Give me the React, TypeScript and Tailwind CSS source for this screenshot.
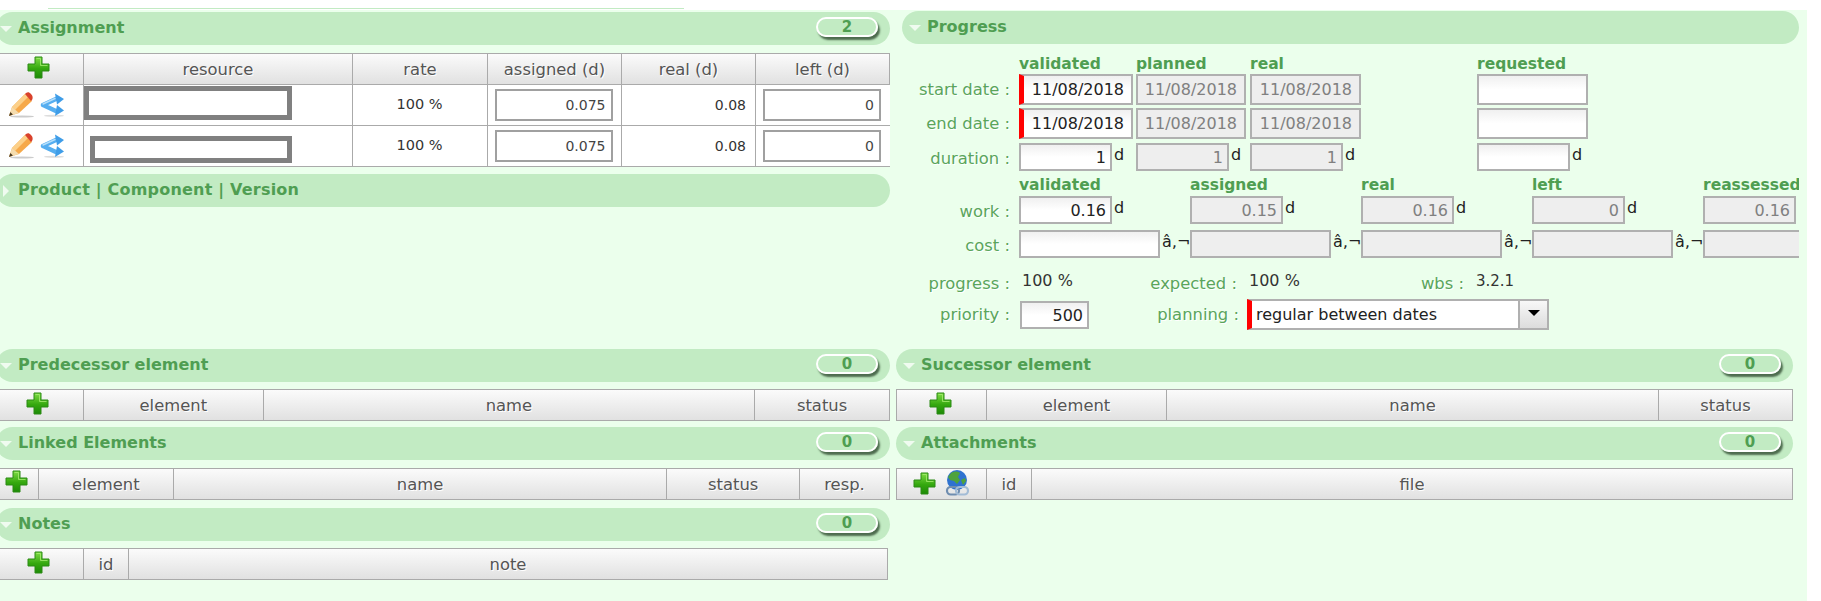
import React from "react";

const font = "[font-family:'DejaVu_Sans',Verdana,sans-serif]";

function Plus() {
  return (
    <svg width="23" height="23" viewBox="0 0 23 23" className="shrink-0">
      <defs>
        <linearGradient id="pg" x1="0" y1="0" x2="0" y2="1">
          <stop offset="0" stopColor="#7fdc45" />
          <stop offset="0.55" stopColor="#35a80f" />
          <stop offset="1" stopColor="#1c8a06" />
        </linearGradient>
      </defs>
      <path d="M8 1h7v7h7v7h-7v7H8v-7H1V8h7z" fill="url(#pg)" stroke="#2a8a15" strokeWidth="1" />
      <path d="M9.5 2.5h4v7h7" fill="none" stroke="#a5ec70" strokeWidth="1" opacity="0.8" />
    </svg>
  );
}

function Pencil() {
  return (
    <svg width="26" height="26" viewBox="0 0 26 26" className="shrink-0">
      <ellipse cx="14" cy="24.5" rx="12" ry="1" fill="#ccc" />
      <path d="M1 24l3-9L17 2l7 7L11 21z" fill="#f6a94a" />
      <path d="M4 15L17 2l3 3L7 18z" fill="#fcd089" />
      <path d="M18 1c2-1 3-1 5 1s2 4 1 6l-1 1-6-7z" fill="#d9412b" />
      <path d="M1 24l3-9 7 6z" fill="#f5dcae" />
      <path d="M1 24l1.3-4 2.7 2.4z" fill="#4a3a20" />
    </svg>
  );
}

function Share() {
  return (
    <svg width="25" height="24" viewBox="0 0 25 24" className="shrink-0">
      <ellipse cx="14" cy="22.8" rx="10" ry="1" fill="#ddd" />
      <path d="M3 12L17 5.5M3 12l14 6.5" fill="none" stroke="#56aef0" strokeWidth="4.5" strokeLinecap="round" />
      <path d="M15 0.5l9 5.5-7 5.5z" fill="#3f9de8" strokeLinejoin="round" />
      <path d="M15 23l9-5.5-7-5.5z" fill="#3f9de8" strokeLinejoin="round" />
      <path d="M3 11L15 5.5" fill="none" stroke="#b5defa" strokeWidth="1.4" strokeLinecap="round" />
    </svg>
  );
}

function Globe() {
  return (
    <svg width="25" height="26" viewBox="0 0 25 26" className="shrink-0">
      <circle cx="12" cy="10" r="10" fill="#2f72d0" />
      <path d="M6 3c3-2 7-2 9 0l-2 4 2 3-3 4-3-3-4-1-2-3z" fill="#4fa33c" />
      <path d="M16 10l4-2 1 3-3 4z" fill="#4fa33c" />
      <rect x="2" y="17" width="12" height="7.5" rx="3.7" fill="none" stroke="#6f8db0" strokeWidth="2.2" />
      <rect x="11" y="17" width="12" height="7.5" rx="3.7" fill="none" stroke="#a3bcd6" strokeWidth="2.2" />
    </svg>
  );
}

function Header({
  title,
  count,
  open = true,
  right,
  className = "",
}: {
  title: string;
  count?: number;
  open?: boolean;
  right?: boolean;
  className?: string;
}) {
  return (
    <div className={`flex h-[33px] items-center rounded-[17px] bg-[#c2ebc3] ${className}`}>
      <span className={`flex shrink-0 justify-start ${right ? "w-[25px] pl-[7px]" : "w-[22px] pl-[4px]"}`}>
        {open ? (
          <span className="h-0 w-0 border-x-[6px] border-t-[6px] border-x-transparent border-t-[#f0fbf0]" />
        ) : (
          <span className="ml-[3px] h-0 w-0 border-y-[6px] border-l-[6px] border-y-transparent border-l-[#f0fbf0]" />
        )}
      </span>
      <span className={`pb-[1px] text-[16px] font-bold leading-none text-[#4f9e52] ${open ? "" : "tracking-[0.2px] pb-[2px]"}`}>{title}</span>
      {count !== undefined && (
        <span className="mb-[3px] ml-auto mr-[12px] flex h-[20px] w-[62px] items-center justify-center rounded-full border-2 border-white text-[15px] font-bold text-[#4f9e52] shadow-[2px_3px_2px_#4d6b4e]">
          {count}
        </span>
      )}
    </div>
  );
}

function Th({ children, w, last }: { children?: React.ReactNode; w: string; last?: boolean }) {
  return (
    <div
      className={`flex h-full items-center justify-center bg-gradient-to-b from-[#fbfbfb] to-[#e1e1e1] text-[16.4px] text-[#555] [text-shadow:1px_1px_0_#fff] ${w} ${last ? "" : "border-r border-[#aaa]"}`}
    >
      {typeof children === "string" ? <span className="pt-[2px]">{children}</span> : children}
    </div>
  );
}

function NumInput({ v }: { v: string }) {
  return (
    <div className="mr-[2px] flex h-[32px] w-[118px] items-center justify-end border-2 border-[#a0a0a0] bg-white pr-[5px] text-[14px] text-[#444]">
      {v}
    </div>
  );
}

function Cell({ children, w, last, right }: { children?: React.ReactNode; w: string; last?: boolean; right?: boolean }) {
  return (
    <div className={`flex h-full items-center ${w} ${right ? "justify-end pr-[9px]" : "justify-center"} ${last ? "" : "border-r border-[#aaa]"}`}>
      {children}
    </div>
  );
}

function AssignRow({ top }: { top?: boolean }) {
  return (
    <div className="flex h-[41px] border-b border-[#aaa] bg-white text-[14px] text-[#333]">
      <Cell w="w-[84px]">
        <span className="flex items-center gap-[6px] pr-[10px]">
          <Pencil />
          <Share />
        </span>
      </Cell>
      <div className="flex h-full w-[269px] border-r border-[#aaa]">
        {top ? (
          <div className="mt-[1px] h-[34px] w-[208px] border-[5px] border-[#808080] bg-white" />
        ) : (
          <div className="ml-[6px] mt-[10px] h-[27px] w-[202px] border-[5px] border-[#808080] bg-white" />
        )}
      </div>
      <Cell w="w-[135px]">
        <span className="pr-[1px] text-[14.5px]">100 %</span>
      </Cell>
      <Cell w="w-[134px]">
        <NumInput v="0.075" />
      </Cell>
      <Cell w="w-[134px]" right>
        0.08
      </Cell>
      <Cell w="w-[134px]" last>
        <NumInput v="0" />
      </Cell>
    </div>
  );
}

function Field({
  v = "",
  w,
  h = "h-[28px]",
  disabled,
  req,
  date,
  unit,
}: {
  v?: string;
  w: string;
  h?: string;
  disabled?: boolean;
  req?: boolean;
  date?: boolean;
  unit?: string;
}) {
  return (
    <div className="flex items-start">
      <div
        className={`flex shrink-0 items-center justify-end border-2 border-[#b0b0b0] pt-[1px] text-[16px] ${w} ${h} ${date ? "pr-[7px]" : "pr-[4px]"} ${
          disabled
            ? "bg-[#eeeeee] text-[#808080]"
            : "bg-gradient-to-b from-[#f0f0f0] via-white to-white text-[#222]"
        } ${req ? "border-l-[5px] border-l-[#ff0000]" : ""}`}
      >
        {v}
      </div>
      {unit && <span className="ml-[2px] whitespace-nowrap text-[16px] leading-[24px] text-[#222]">{unit}</span>}
    </div>
  );
}

function Label({ children, w = "w-[108px]" }: { children: React.ReactNode; w?: string }) {
  return (
    <div className={`shrink-0 pt-[4px] text-right text-[16.4px] leading-[24px] text-[#5aa55c] [text-shadow:1px_1px_0_#fff] ${w}`}>
      {children}
    </div>
  );
}

function Cap({ children }: { children: React.ReactNode }) {
  return <div className="text-[15.5px] font-bold leading-[18px] text-[#4f9e52]">{children}</div>;
}

function Progress() {
  const dateCols = "grid grid-cols-[117px_117px_114px_227px_1fr] items-start";
  const workCols = "grid grid-cols-[117px_171px_171px_171px_171px_95px] items-start";
  return (
    <div className="w-[897px] overflow-hidden">
      <Header title="Progress" right />
      <div className="mt-[9px]">
        <div className={`${dateCols} h-[21px] pt-[2px]`}>
          <div />
          <Cap>validated</Cap>
          <Cap>planned</Cap>
          <Cap>real</Cap>
          <Cap>requested</Cap>
        </div>
        <div className={`${dateCols} h-[34px]`}>
          <Label>start date :</Label>
          <Field v="11/08/2018" w="w-[114px]" h="h-[31px]" req date />
          <Field v="11/08/2018" w="w-[110px]" h="h-[31px]" disabled date />
          <Field v="11/08/2018" w="w-[111px]" h="h-[31px]" disabled date />
          <Field w="w-[111px]" h="h-[31px]" />
        </div>
        <div className={`${dateCols} h-[35px]`}>
          <Label>end date :</Label>
          <Field v="11/08/2018" w="w-[114px]" h="h-[31px]" req date />
          <Field v="11/08/2018" w="w-[110px]" h="h-[31px]" disabled date />
          <Field v="11/08/2018" w="w-[111px]" h="h-[31px]" disabled date />
          <Field w="w-[111px]" h="h-[31px]" />
        </div>
        <div className={`${dateCols} h-[32px]`}>
          <Label>duration :</Label>
          <Field v="1" w="w-[93px]" unit="d" />
          <Field v="1" w="w-[93px]" disabled unit="d" />
          <Field v="1" w="w-[93px]" disabled unit="d" />
          <Field w="w-[93px]" unit="d" />
        </div>
        <div className={`${workCols} h-[21px] pt-[1px]`}>
          <div />
          <Cap>validated</Cap>
          <Cap>assigned</Cap>
          <Cap>real</Cap>
          <Cap>left</Cap>
          <Cap>
            <span className="whitespace-nowrap">reassessed</span>
          </Cap>
        </div>
        <div className={`${workCols} h-[34px]`}>
          <Label>work :</Label>
          <Field v="0.16" w="w-[93px]" unit="d" />
          <Field v="0.15" w="w-[93px]" disabled unit="d" />
          <Field v="0.16" w="w-[93px]" disabled unit="d" />
          <Field v="0" w="w-[93px]" disabled unit="d" />
          <Field v="0.16" w="w-[93px]" disabled />
        </div>
        <div className={`${workCols} h-[38px]`}>
          <Label>cost :</Label>
          <Field w="w-[141px]" unit="â‚¬" />
          <Field w="w-[141px]" disabled unit="â‚¬" />
          <Field w="w-[141px]" disabled unit="â‚¬" />
          <Field w="w-[141px]" disabled unit="â‚¬" />
          <div className="h-[28px] w-[110px] border-2 border-[#b0b0b0] bg-[#eeeeee]" />
        </div>
        <div className="flex h-[31px] items-start text-[16px] leading-[24px] text-[#333]">
          <Label>progress :</Label>
          <span className="ml-[12px] w-[113px] pt-[1px]">100 %</span>
          <Label w="w-[102px]">expected :</Label>
          <span className="ml-[12px] w-[125px] pt-[1px]">100 %</span>
          <Label w="w-[90px]">wbs :</Label>
          <span className="ml-[12px] pt-[1px] text-[15px]">3.2.1</span>
        </div>
        <div className="flex items-start">
          <Label>priority :</Label>
          <div className="ml-[10px] mt-[2px]">
            <Field v="500" w="w-[69px]" />
          </div>
          <div className="ml-[40px]">
            <Label w="w-[110px]">planning :</Label>
          </div>
          <div className="ml-[8px] flex h-[31px] w-[302px] border-2 border-[#b0b0b0] border-l-[5px] border-l-[#ff0000] bg-white">
            <div className="flex flex-1 items-center pl-[4px] pt-[1px] text-[16px] text-[#222]">regular between dates</div>
            <div className="flex w-[29px] items-center justify-center border-l-2 border-[#b0b0b0] bg-gradient-to-b from-[#f8f8f8] to-[#dcdcdc]">
              <span className="mb-[3px] h-0 w-0 border-x-[6px] border-t-[6px] border-x-transparent border-t-black" />
            </div>
          </div>
        </div>
      </div>
    </div>
  );
}

function Table({ cols }: { cols: { w: string; c?: React.ReactNode }[] }) {
  return (
    <div className="flex h-[32px] border border-[#aaa]">
      {cols.map((col, i) => (
        <Th key={i} w={col.w} last={i === cols.length - 1}>
          {col.c}
        </Th>
      ))}
    </div>
  );
}

export default function App() {
  return (
    <div className={`relative h-[601px] w-[1821px] overflow-hidden bg-white ${font}`}>
      <div className="ml-[48px] mt-[8px] h-[1px] w-[636px] bg-[#c2ebc3]" />
      <div className="mt-[1px] h-[591px] w-[1807px] bg-[#ebffec]">
        {/* top */}
        <div className="flex h-[339px]">
          <div className="-ml-[4px] w-[894px] shrink-0 pt-[2px]">
            <Header title="Assignment" count={2} />
            <div className="mt-[8px] border-t border-[#aaa] pl-[4px]">
              <div className="flex h-[31px] border-b border-[#aaa]">
                <Th w="w-[84px] [&>svg]:mr-[7px] [&>svg]:mb-[3px]">
                  <Plus />
                </Th>
                <Th w="w-[269px]">resource</Th>
                <Th w="w-[135px]">rate</Th>
                <Th w="w-[134px]">assigned (d)</Th>
                <Th w="w-[134px]">real (d)</Th>
                <Th w="w-[134px]">left (d)</Th>
              </div>
              <AssignRow top />
              <AssignRow />
            </div>
            <Header title="Product | Component | Version" open={false} className="mt-[7px]" />
          </div>
          <div className="ml-[12px] pt-[1px]">
            <Progress />
          </div>
        </div>
        {/* bottom */}
        <div className="flex">
          <div className="-ml-[4px] w-[894px] shrink-0">
            <Header title="Predecessor element" count={0} />
            <div className="mt-[7px] pl-[4px]">
              <div className="-ml-[1px]">
                <Table
                  cols={[
                    { w: "w-[84px] [&>svg]:mr-[7px] [&>svg]:mb-[3px]", c: <Plus /> },
                    { w: "w-[180px]", c: "element" },
                    { w: "w-[492px]", c: "name" },
                    { w: "w-[134px]", c: "status" },
                  ]}
                />
              </div>
            </div>
            <Header title="Linked Elements" count={0} className="mt-[6px]" />
            <div className="mt-[8px] pl-[4px]">
              <div className="-ml-[1px]">
                <Table
                  cols={[
                    { w: "w-[39px] [&>svg]:mr-[4px] [&>svg]:mb-[5px]", c: <Plus /> },
                    { w: "w-[135px]", c: "element" },
                    { w: "w-[494px]", c: "name" },
                    { w: "w-[133px]", c: "status" },
                    { w: "w-[89px]", c: "resp." },
                  ]}
                />
              </div>
            </div>
            <Header title="Notes" count={0} className="mt-[8px]" />
            <div className="mt-[7px] pl-[4px]">
              <div className="-ml-[1px] w-[889px]">
                <Table
                  cols={[
                    { w: "w-[84px] [&>svg]:mr-[7px] [&>svg]:mb-[3px]", c: <Plus /> },
                    { w: "w-[45px]", c: "id" },
                    { w: "w-[758px]", c: "note" },
                  ]}
                />
              </div>
            </div>
          </div>
          <div className="ml-[6px] w-[897px]">
            <Header title="Successor element" count={0} right />
            <div className="mt-[7px]">
              <Table
                cols={[
                  { w: "w-[90px] [&>svg]:mr-[2px] [&>svg]:mb-[3px]", c: <Plus /> },
                  { w: "w-[180px]", c: "element" },
                  { w: "w-[492px]", c: "name" },
                  { w: "w-[133px]", c: "status" },
                ]}
              />
            </div>
            <Header title="Attachments" count={0} right className="mt-[6px]" />
            <div className="mt-[8px]">
              <Table
                cols={[
                  {
                    w: "w-[90px]",
                    c: (
                      <span className="flex items-center gap-[9px] pb-[2px]">
                        <Plus />
                        <Globe />
                      </span>
                    ),
                  },
                  { w: "w-[45px]", c: "id" },
                  { w: "w-[760px]", c: "file" },
                ]}
              />
            </div>
          </div>
        </div>
      </div>
    </div>
  );
}
